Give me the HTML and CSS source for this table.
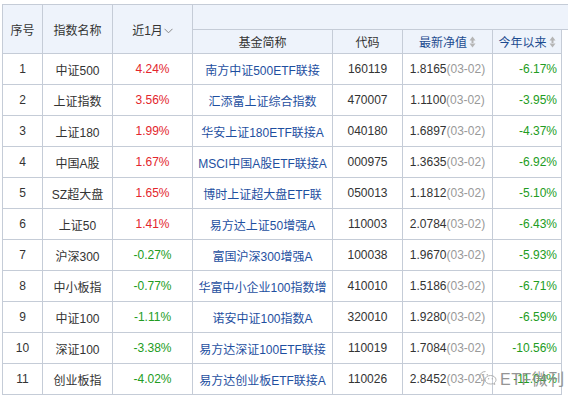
FILE: index.html
```html
<!DOCTYPE html>
<html lang="zh">
<head>
<meta charset="utf-8">
<link rel="stylesheet" href="styles.css">
</head>
<body>
<div class="page">
<table class="grid">
  <colgroup>
    <col class="c-no"><col class="c-idx"><col class="c-m1"><col class="c-fund"><col class="c-code"><col class="c-nav"><col class="c-ytd"><col class="c-extra">
  </colgroup>
  <thead>
    <tr class="h1">
      <th rowspan="2">序号</th>
      <th rowspan="2">指数名称</th>
      <th rowspan="2" class="m1">近1月<svg class="chev" width="9" height="6" viewBox="0 0 9 6"><path d="M0.5 0.8 L4.5 4.8 L8.5 0.8" fill="none" stroke="#888" stroke-width="1"/></svg></th>
      <th colspan="5" class="blank"></th>
    </tr>
    <tr class="h2">
      <th>基金简称</th>
      <th>代码</th>
      <th class="sort">最新净值<svg class="arr" width="7" height="12" viewBox="0 0 7 12"><path d="M3.5 0.5 L6.5 4.5 H0.5 Z M3.5 11.5 L6.5 7.5 H0.5 Z M2.5 4 H4.5 V8 H2.5 Z" fill="#b5b5b5"/></svg></th>
      <th class="sort">今年以来<svg class="arr" width="7" height="12" viewBox="0 0 7 12"><path d="M3.5 0.5 L6.5 4.5 H0.5 Z M3.5 11.5 L6.5 7.5 H0.5 Z M2.5 4 H4.5 V8 H2.5 Z" fill="#b5b5b5"/></svg></th>
      <th class="extra"></th>
    </tr>
  </thead>
  <tbody>
    <tr><td>1</td><td>中证500</td><td class="up">4.24%</td><td class="fund">南方中证500ETF联接</td><td>160119</td><td>1.8165<span class="d">(03-02)</span></td><td class="ytd">-6.17%</td><td class="extra"></td></tr>
    <tr><td>2</td><td>上证指数</td><td class="up">3.56%</td><td class="fund">汇添富上证综合指数</td><td>470007</td><td>1.1100<span class="d">(03-02)</span></td><td class="ytd">-3.95%</td><td class="extra"></td></tr>
    <tr><td>3</td><td>上证180</td><td class="up">1.99%</td><td class="fund">华安上证180ETF联接A</td><td>040180</td><td>1.6897<span class="d">(03-02)</span></td><td class="ytd">-4.37%</td><td class="extra"></td></tr>
    <tr><td>4</td><td>中国A股</td><td class="up">1.67%</td><td class="fund">MSCI中国A股ETF联接A</td><td>000975</td><td>1.3635<span class="d">(03-02)</span></td><td class="ytd">-6.92%</td><td class="extra"></td></tr>
    <tr><td>5</td><td>SZ超大盘</td><td class="up">1.65%</td><td class="fund">博时上证超大盘ETF联</td><td>050013</td><td>1.1812<span class="d">(03-02)</span></td><td class="ytd">-5.10%</td><td class="extra"></td></tr>
    <tr><td>6</td><td>上证50</td><td class="up">1.41%</td><td class="fund">易方达上证50增强A</td><td>110003</td><td>2.0784<span class="d">(03-02)</span></td><td class="ytd">-6.43%</td><td class="extra"></td></tr>
    <tr><td>7</td><td>沪深300</td><td class="down">-0.27%</td><td class="fund">富国沪深300增强A</td><td>100038</td><td>1.9670<span class="d">(03-02)</span></td><td class="ytd">-5.93%</td><td class="extra"></td></tr>
    <tr><td>8</td><td>中小板指</td><td class="down">-0.77%</td><td class="fund">华富中小企业100指数增</td><td>410010</td><td>1.5186<span class="d">(03-02)</span></td><td class="ytd">-6.71%</td><td class="extra"></td></tr>
    <tr><td>9</td><td>中证100</td><td class="down">-1.11%</td><td class="fund">诺安中证100指数A</td><td>320010</td><td>1.9280<span class="d">(03-02)</span></td><td class="ytd">-6.59%</td><td class="extra"></td></tr>
    <tr><td>10</td><td>深证100</td><td class="down">-3.38%</td><td class="fund">易方达深证100ETF联接</td><td>110019</td><td>1.7084<span class="d">(03-02)</span></td><td class="ytd">-10.56%</td><td class="extra"></td></tr>
    <tr><td>11</td><td>创业板指</td><td class="down">-4.02%</td><td class="fund">易方达创业板ETF联接A</td><td>110026</td><td>2.8452<span class="d">(03-02)</span></td><td class="ytd">-11.04%</td><td class="extra"></td></tr>
  </tbody>
</table>
<div class="mark">
  <svg class="wx" width="18" height="17" viewBox="0 0 18 17"><path d="M6.5 1.5 C3.2 1.5 1 3.6 1 6 C1 7.4 1.7 8.5 2.9 9.3 L2.4 11 L4.4 10 C5.1 10.2 5.8 10.3 6.5 10.3" fill="none" stroke="#aaa" stroke-width="1"/><path d="M11.5 5.5 C14.5 5.5 17 7.4 17 9.8 C17 11 16.4 12 15.4 12.8 L15.8 14.5 L13.9 13.6 C13.2 13.9 12.4 14 11.5 14 C8.5 14 6 12.1 6 9.8 C6 7.4 8.5 5.5 11.5 5.5 Z" fill="none" stroke="#aaa" stroke-width="1"/><circle cx="4.5" cy="4.8" r="0.8" fill="#aaa"/><circle cx="8.3" cy="4.8" r="0.8" fill="#aaa"/><circle cx="9.6" cy="8.8" r="0.7" fill="#aaa"/><circle cx="13.3" cy="8.8" r="0.7" fill="#aaa"/></svg>
  <span class="mark-text">ETF微刊</span>
</div>
</div>
</body>
</html>
```

FILE: styles.css
```css
html, body {
  margin: 0;
  padding: 0;
  background: #fff;
}
.page {
  position: relative;
  width: 568px;
  height: 400px;
  overflow: hidden;
  padding: 4px 0 0 2px;
  box-sizing: border-box;
  font-family: "Liberation Sans", "Noto Sans CJK SC", sans-serif;
  font-size: 12px;
  color: #333;
}
.grid {
  border-collapse: collapse;
  table-layout: fixed;
  width: 610px;
}
.c-no { width: 40px; }
.c-idx { width: 70px; }
.c-m1 { width: 80px; }
.c-fund { width: 140px; }
.c-code { width: 70px; }
.c-nav { width: 90px; }
.c-ytd { width: 69px; }
.c-extra { width: 51px; }
.grid th, .grid td {
  border: 1px solid #c5ccd7;
  padding: 0;
  text-align: center;
  white-space: nowrap;
  overflow: hidden;
}
.grid th {
  background: #eef3fb;
  font-weight: normal;
  color: #333;
}
.h1 { height: 25px; }
.h2 { height: 24px; }
.grid .blank { border-right: none; }
.grid th.extra {
  background: #fff;
  border: none;
  border-left: 1px solid #c5ccd7;
}
.grid td.extra {
  border: none;
  border-left: 1px solid #c5ccd7;
  background: #fff;
}
.grid tbody tr { height: 31px; }
.chev {
  margin-left: 1px;
  vertical-align: 1px;
}
.grid .sort { color: #1d4b90; }
.arr {
  margin-left: 2px;
  vertical-align: -1px;
}
.up { color: #e3262d; }
.down, .ytd { color: #229c22; }
.grid td.ytd {
  text-align: right;
  padding-right: 4px;
}
.fund { color: #1e4f9f; }
.d { color: #999; }
.mark {
  position: absolute;
  left: 479px;
  top: 366px;
  display: flex;
  align-items: center;
  gap: 3px;
  opacity: 0.9;
}
.mark-text {
  font-size: 16px;
  color: #8a8a8a;
  letter-spacing: 0.5px;
}
```
